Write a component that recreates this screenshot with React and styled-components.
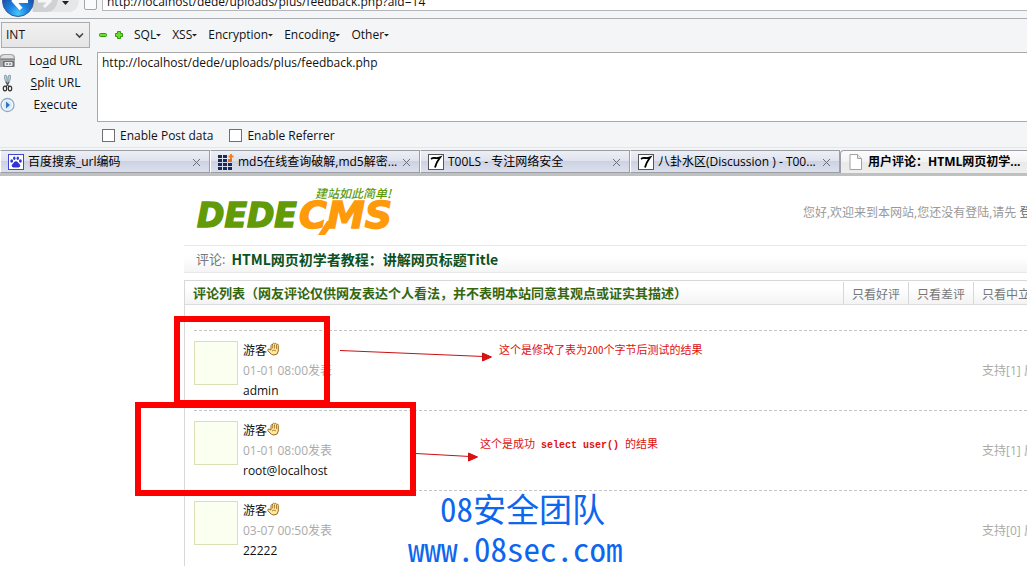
import React from 'react';
import styled, { createGlobalStyle } from 'styled-components';

const GlobalStyle = createGlobalStyle`
  * {
    box-sizing: border-box;
  }

  body {
    margin: 0;
    background: #ffffff;
    color: #111111;
    font-family: "Open Sans", "Noto Sans CJK SC", sans-serif;
    font-size: 12px;
    line-height: 20px;
    overflow: hidden;
  }

  button, input, select, textarea {
    font: inherit;
    color: inherit;
  }

  a {
    color: inherit;
    text-decoration: none;
  }
`;

const Chrome = styled.header`
  background: #f4f5f7;
`;

const NavBar = styled.div`
  display: flex;
  align-items: flex-end;
  height: 19px;
  border-bottom: 1px solid #a9acb1;
  overflow: hidden;
`;

const NavButtons = styled.button`
  flex: none;
  width: 84px;
  height: 18px;
  padding: 0;
  border: 0;
  background: none;

  svg {
    display: block;
  }
`;

const Address = styled.label`
  flex: 1;
  display: flex;
  align-items: flex-end;
  gap: 5px;
  padding-bottom: 7px;

  span {
    width: 13px;
    height: 16px;
    margin-bottom: 1px;
    border: 1px solid #a5a5a5;
    border-radius: 2px;
    background: #fbfbfb;
  }

  input {
    flex: 1;
    height: 18px;
    padding: 0 4px;
    border: 1px solid #b4b6ba;
    border-right: 0;
    background: #ffffff;
    font-size: 12px;
    outline: 0;
  }
`;

const HackBar = styled.section`
  display: flex;
  height: 129px;
  padding-top: 3px;
  border-bottom: 1px solid #e3e5e8;
`;

const SideColumn = styled.div`
  flex: none;
  width: 97px;
`;

const ModeSelect = styled.div`
  position: relative;
  width: 90px;
  height: 26px;
  margin-bottom: 2px;
  margin-left: 1px;

  select {
    appearance: none;
    width: 89px;
    height: 26px;
    padding: 0 4px;
    border: 1px solid #acacac;
    border-radius: 0;
    background: linear-gradient(#f1f1f1, #e5e5e5);
    font-size: 12px;
  }

  svg {
    position: absolute;
    top: 10px;
    right: 7px;
    pointer-events: none;
  }
`;

const SideButton = styled.button`
  display: flex;
  align-items: center;
  width: 92px;
  height: 22px;
  padding: 0;
  border: 0;
  background: none;
  font-size: 12px;

  svg {
    flex: none;
  }

  span {
    flex: 1;
    padding-left: 3px;
    text-align: center;
    white-space: nowrap;
  }

  u {
    text-underline-offset: 2px;
  }
`;

const MainColumn = styled.div`
  flex: 1;
  min-width: 0;
`;

const MenuBar = styled.nav`
  display: flex;
  align-items: center;
  height: 26px;
  margin-bottom: 4px;
`;

const IconButton = styled.button`
  width: 16px;
  height: 16px;
  padding: 0;
  border: 0;
  background: none;

  svg {
    display: block;
  }
`;

const MenuButton = styled.button`
  display: flex;
  align-items: center;
  padding: 0;
  margin-left: ${(props) => (props.$first ? '5px' : '11px')};
  border: 0;
  background: none;
  font-size: 12px;
`;

const UrlArea = styled.textarea`
  display: block;
  width: 100%;
  height: 70px;
  padding: 0 4px;
  border: 1px solid #a9a9a9;
  border-right: 0;
  background: #ffffff;
  font-size: 12px;
  line-height: 20px;
  outline: 0;
  resize: none;
`;

const Options = styled.div`
  display: flex;
  align-items: center;
  gap: 16px;
  height: 27px;
  padding-left: 5px;
`;

const Option = styled.label`
  display: flex;
  align-items: center;
  gap: 5px;
  font-size: 12px;

  input {
    appearance: none;
    width: 13px;
    height: 13px;
    margin: 0;
    border: 1px solid #707070;
    background: #ffffff;
  }
`;

const TabStrip = styled.div`
  display: flex;
  height: 28px;
  padding-top: 2px;
  border-bottom: 3px solid #bfc1c0;
  overflow: hidden;
`;

const Tab = styled.div`
  flex: none;
  display: flex;
  align-items: center;
  width: ${(props) => (props.$active ? '240px' : '210px')};
  padding: 0 7px;
  border: 1px solid #9c9ea6;
  border-bottom: ${(props) => (props.$active ? '0' : '1px solid #9c9ea6')};
  border-left-color: ${(props) => (props.$active ? '#9c9ea6' : '#ffffff')};
  border-radius: ${(props) => (props.$active ? '4px 0 0 0' : '0')};
  background: ${(props) =>
    props.$active
      ? 'linear-gradient(#fcfcfc, #f2f2f2 50%, #e9e9ea 50%, #eeeeee)'
      : 'linear-gradient(#edeff5, #dfe2ee 48%, #cdd2e3 50%, #dce0ec)'};
  font-weight: ${(props) => (props.$active ? '700' : '400')};

  svg {
    flex: none;
  }
`;

const TabTitle = styled.a`
  flex: 1;
  padding-left: 4px;
  font-size: 12px;
  color: #000000;
  white-space: nowrap;
`;

const Site = styled.main`
  margin-left: 184px;
`;

const SiteHeader = styled.header`
  display: flex;
  justify-content: space-between;
  align-items: flex-start;
  height: 69px;
  padding-left: 10px;
`;

const Welcome = styled.p`
  flex: none;
  width: 224px;
  margin: 0;
  padding-top: 27px;
  overflow: hidden;
  color: #999999;
  white-space: nowrap;

  a {
    color: #666666;
  }
`;

const TitleBar = styled.div`
  display: flex;
  align-items: center;
  gap: 6px;
  height: 28px;
  margin-bottom: 7px;
  padding-left: 12px;
  border-top: 1px solid #e8e8e8;
  border-bottom: 1px solid #e8e8e8;
  background: linear-gradient(#ffffff 40%, #f4f4f4);
  color: #777777;
  font-size: 13px;

  h1 {
    margin: 0;
    color: #0b5123;
    font-family: "Noto Sans CJK SC", sans-serif;
    font-size: 14px;
    font-weight: 700;
  }
`;

const CommentBox = styled.section`
  border-top: 1px solid #d8d8d8;
  border-left: 1px solid #d8d8d8;
`;

const CommentHeader = styled.div`
  display: flex;
  justify-content: space-between;
  align-items: flex-end;
  height: 24px;
  border-bottom: 1px solid #dcdcdc;
  background: linear-gradient(#ffffff 30%, #f3f3f3);

  h2 {
    align-self: center;
    margin: 0;
    padding-left: 8px;
    color: #35660f;
    font-size: 13px;
    font-weight: 700;
    white-space: nowrap;
  }
`;

const Filters = styled.nav`
  flex: none;
  display: flex;
  width: 184px;
  overflow: hidden;
`;

const Filter = styled.a`
  flex: none;
  width: 65px;
  height: 22px;
  padding: 3px 0 0 8px;
  border-left: 1px solid #d8d8d8;
  color: #777777;
  white-space: nowrap;
`;

const CommentList = styled.ul`
  margin: 0;
  padding: 25px 0 0 9px;
  list-style: none;
`;

const CommentItem = styled.li`
  display: flex;
  gap: 5px;
  height: 80px;
  padding-top: 10px;
  border-top: 1px dashed #c4c4c4;
`;

const Avatar = styled.div`
  flex: none;
  width: 44px;
  height: 44px;
  border: 1px solid #dcdfb4;
  background: #fafff0;
`;

const CommentBody = styled.div`
  flex: 1;

  p {
    margin: 0;
  }
`;

const Author = styled.p`
  display: flex;
  align-items: center;
  height: 20px;

  svg {
    margin-bottom: 4px;
  }
`;

const PostTime = styled.p`
  color: #aaaaaa;
`;

const Votes = styled.div`
  flex: none;
  width: 45px;
  padding-top: 20px;
  overflow: hidden;
  color: #aaaaaa;
  white-space: nowrap;
`;

// marks drawn over the page
const RedBox = styled.div`
  position: absolute;
  left: ${(props) => props.$left}px;
  top: ${(props) => props.$top}px;
  width: ${(props) => props.$width}px;
  height: ${(props) => props.$height}px;
  border: 6px solid #fe0000;
`;

const ArrowLayer = styled.svg`
  position: absolute;
  left: 340px;
  top: 340px;
  pointer-events: none;
`;

const Note = styled.p`
  position: absolute;
  left: ${(props) => props.$left}px;
  top: ${(props) => props.$top}px;
  margin: 0;
  color: #e01010;
  font-family: "Noto Sans CJK SC", sans-serif;
  font-size: 11px;
  line-height: 16px;
  font-feature-settings: "hwid";
  white-space: nowrap;

  code {
    font-family: "Liberation Mono", monospace;
    font-size: 10px;
    font-weight: 700;
    white-space: pre;
  }
`;

const Watermark = styled.div`
  position: absolute;
  left: 408px;
  top: 488px;
  color: #0d66ee;
  font-family: "Noto Sans CJK SC", sans-serif;
  font-size: 33px;
  line-height: 40px;
  font-feature-settings: "hwid";
  white-space: nowrap;

  p {
    margin: 0;
  }

  p:first-child {
    padding-left: 32px;
  }
`;

const BackForward = () => (
  <svg width="84" height="18" viewBox="0 0 84 18">
    <defs>
      <radialGradient id="ball" cx="50%" cy="90%" r="75%">
        <stop offset="0" stopColor="#47c8ff" />
        <stop offset="0.4" stopColor="#1d84e0" />
        <stop offset="1" stopColor="#1a3f9a" />
      </radialGradient>
    </defs>
    <path d="M30 0h49q-1 11-9 12H32z" fill="#e6e7e9" />
    <path d="M33 0h25q-2 11-10 12H33z" fill="#cfd1d3" />
    <circle cx="18" cy="1" r="15.5" fill="url(#ball)" stroke="#3d5c96" />
    <path d="M20-5l-6 6 7 8M14 1h14" stroke="#fff" strokeWidth="4" fill="none" />
    <path d="M44-4l6 5-6 6M38 1h10" stroke="#f6f6f6" strokeWidth="3" fill="none" />
    <path d="M62 1h7l-3.500 4z" fill="#222" />
  </svg>
);

const Caret = () => (
  <svg width="5" height="4" viewBox="0 0 5 4">
    <path d="M0 1h5L2.500 3.500z" fill="#222" />
  </svg>
);

const LoadIcon = () => (
  <svg width="16" height="16" viewBox="0 0 16 16">
    <path d="M0 3q1-2 4-2h7q3 0 4 3v9q0 1-1 1H0z" fill="#a3a5a8" />
    <path d="M1 4q1-2 4-2h6q2 0 3 3H1z" fill="#dfe0e2" />
    <path d="M0 6h15v1H0z" fill="#85888c" />
    <rect x="3" y="8" width="11" height="6" rx="1" fill="#6b6e72" />
    <rect x="4.500" y="9" width="8" height="4" rx="1" fill="#e8e9ea" />
    <path d="M6 11h2m1 0h2" stroke="#55585c" />
  </svg>
);

const ScissorsIcon = () => (
  <svg width="16" height="18" viewBox="0 0 16 18">
    <path d="M5 1q2 0 2 3v6l-2-4q-1-4 0-5zM10 1q-2 0-2 3v6l2-4q1-4 0-5z" fill="#c9dbe2" stroke="#7e9aa6" />
    <path d="M6 8l3 5M9 8l-3 5" stroke="#555" strokeWidth="1.300" />
    <ellipse cx="5" cy="14.500" rx="1.700" ry="2.300" fill="none" stroke="#333" strokeWidth="1.200" />
    <ellipse cx="10" cy="14.500" rx="1.700" ry="2.300" fill="none" stroke="#333" strokeWidth="1.200" />
  </svg>
);

const ExecuteIcon = () => (
  <svg width="16" height="16" viewBox="0 0 16 16">
    <circle cx="7.500" cy="8" r="6.500" fill="#f4f9fe" stroke="#91a9c4" strokeWidth="1.300" />
    <circle cx="7.500" cy="8" r="4.500" fill="#dcebf9" />
    <path d="M6 4.500l4 3.500-4 3.500z" fill="#2d74c4" />
  </svg>
);

const PawIcon = () => (
  <svg width="16" height="16" viewBox="0 0 16 16">
    <rect x="0.500" y="0.500" width="15" height="15" fill="#fff" stroke="#3d46d8" />
    <g fill="#2b35d8">
      <ellipse cx="3.700" cy="7" rx="1.400" ry="1.700" />
      <ellipse cx="6.300" cy="4.200" rx="1.200" ry="1.700" />
      <ellipse cx="9.800" cy="4.200" rx="1.200" ry="1.700" />
      <ellipse cx="12.400" cy="7" rx="1.400" ry="1.700" />
      <path d="M8 7.300c1.800 0 2.200 1.700 3.600 2.900 1.400 1.200.5 3.200-1.100 3.200h-5c-1.600 0-2.500-2-1.100-3.200C5.800 9 6.200 7.300 8 7.300z" />
    </g>
  </svg>
);

const GridIcon = () => (
  <svg width="16" height="16" viewBox="0 0 16 16">
    <g fill="#1b2b59">
      {[1, 5, 9, 13].map((y) =>
        [0, 5, 10].map((x) =>
          x === 10 && y < 9 ? null : <rect key={`${x}-${y}`} x={x} y={y} width="4" height="3" />
        )
      )}
    </g>
    <path d="M13 0v5M10.500 2.500h5" stroke="#f08020" strokeWidth="2" />
    <rect x="10" y="5" width="4" height="3" fill="#e07020" />
  </svg>
);

const SevenIcon = () => (
  <svg width="16" height="16" viewBox="0 0 16 16">
    <rect x="0.500" y="0.500" width="15" height="15" fill="#fff" stroke="#555" />
    <path d="M3 5q2-1.500 4-1t5-.5Q8.500 8 7 13.500" fill="none" stroke="#000" strokeWidth="1.900" />
  </svg>
);

const PageIcon = () => (
  <svg width="16" height="16" viewBox="0 0 16 16">
    <path d="M2 .5h7.500l4 4v11H2z" fill="#fff" stroke="#a2a2a2" />
    <path d="M9.500.5v4h4" fill="#e8e8e8" stroke="#a2a2a2" />
  </svg>
);

const CloseIcon = () => (
  <svg width="12" height="12" viewBox="0 0 12 12">
    <path d="M3 3l7 7M10 3l-7 7" stroke="#6c6f79" />
  </svg>
);

const HandIcon = () => (
  <svg width="13" height="14" viewBox="0 0 13 14">
    <path
      d="M4 8V3.500q.5-1.500 1.500-.5V2q1-1.500 2-.2 1.300-1 2 .4 1.600-.5 1.800 1.200V9q-.3 4-4.300 4-2.500 0-4-2L.8 8.500Q.5 7 2 7z"
      fill="#ffe9a6"
      stroke="#9a6a14"
    />
    <path d="M5.700 3v3.500M7.600 2.500v4M9.500 3v4M5 9q2-2 4 0" stroke="#9a6a14" strokeWidth="0.800" fill="none" />
  </svg>
);

const Logo = () => (
  <svg width="210" height="69" viewBox="0 0 210 69" role="img" aria-label="DEDECMS">
    <g fontFamily="DejaVu Sans" fontWeight="700" fontStyle="italic">
      <text x="3" y="51" fontSize="33" fill="#629a08" stroke="#629a08" strokeWidth="1.500">DEDE</text>
      <text x="105" y="52" fontSize="38" fill="#ff9a0a" stroke="#ff9a0a" strokeWidth="1.500">CMS</text>
    </g>
    <path d="M133 45h8l-10 14h-7z" fill="#ff9a0a" />
    <text x="121" y="22" fontFamily="Noto Sans CJK SC" fontSize="12" fontWeight="500" fontStyle="italic" fill="#629a08">
      建站如此简单!
    </text>
  </svg>
);

const tabs = [
  { icon: PawIcon, title: '百度搜索_url编码' },
  { icon: GridIcon, title: 'md5在线查询破解,md5解密...' },
  { icon: SevenIcon, title: 'T00LS - 专注网络安全' },
  { icon: SevenIcon, title: '八卦水区(Discussion ) - T00...' },
  { icon: PageIcon, title: '用户评论：HTML网页初学...', active: true },
];

const comments = [
  { time: '01-01 08:00', text: 'admin', votes: 1 },
  { time: '01-01 08:00', text: 'root@localhost', votes: 1 },
  { time: '03-07 00:50', text: '22222', votes: 0 },
];

const App = () => {
  return (
    <>
      <GlobalStyle />
      <Chrome>
        <NavBar>
          <NavButtons type="button" aria-label="Back">
            <BackForward />
          </NavButtons>
          <Address>
            <span />
            <input type="text" aria-label="Address" defaultValue="http://localhost/dede/uploads/plus/feedback.php?aid=14" />
          </Address>
        </NavBar>

        <HackBar>
          <SideColumn>
            <ModeSelect>
              <select aria-label="Mode" defaultValue="INT">
                <option>INT</option>
              </select>
              <svg width="9" height="7" viewBox="0 0 9 7">
                <path d="M1 1.500l3.500 3.500L8 1.500" stroke="#444" strokeWidth="1.600" fill="none" />
              </svg>
            </ModeSelect>
            <SideButton type="button">
              <LoadIcon />
              <span>Lo<u>a</u>d URL</span>
            </SideButton>
            <SideButton type="button">
              <ScissorsIcon />
              <span><u>S</u>plit URL</span>
            </SideButton>
            <SideButton type="button">
              <ExecuteIcon />
              <span>E<u>x</u>ecute</span>
            </SideButton>
          </SideColumn>

          <MainColumn>
            <MenuBar>
              <IconButton type="button" aria-label="Remove">
                <svg width="16" height="16" viewBox="0 0 16 16">
                  <rect x="2.500" y="6.500" width="7" height="3" rx="1" fill="#6fdc2c" stroke="#2f9a10" />
                </svg>
              </IconButton>
              <IconButton type="button" aria-label="Add">
                <svg width="16" height="16" viewBox="0 0 16 16">
                  <path d="M4.500 4.500h3v2h2v3h-2v2h-3v-2h-2v-3h2z" fill="#6fdc2c" stroke="#2f9a10" />
                </svg>
              </IconButton>
              {['SQL', 'XSS', 'Encryption', 'Encoding', 'Other'].map((name, i) => (
                <MenuButton key={name} type="button" $first={i === 0}>
                  {name}
                  <Caret />
                </MenuButton>
              ))}
            </MenuBar>
            <UrlArea aria-label="URL" defaultValue="http://localhost/dede/uploads/plus/feedback.php" />
            <Options>
              <Option>
                <input type="checkbox" />
                Enable Post data
              </Option>
              <Option>
                <input type="checkbox" />
                Enable Referrer
              </Option>
            </Options>
          </MainColumn>
        </HackBar>

        <TabStrip>
          {tabs.map(({ icon: Icon, title, active }) => (
            <Tab key={title} $active={active}>
              <Icon />
              <TabTitle href="#">{title}</TabTitle>
              {!active && <CloseIcon />}
            </Tab>
          ))}
        </TabStrip>
      </Chrome>

      <Site>
        <SiteHeader>
          <Logo />
          <Welcome>
            您好,欢迎来到本网站,您还没有登陆,请先 <a href="#">登</a>
          </Welcome>
        </SiteHeader>

        <TitleBar>
          评论:
          <h1>HTML网页初学者教程：讲解网页标题Title</h1>
        </TitleBar>

        <CommentBox>
          <CommentHeader>
            <h2>评论列表（网友评论仅供网友表达个人看法，并不表明本站同意其观点或证实其描述）</h2>
            <Filters>
              <Filter href="#">只看好评</Filter>
              <Filter href="#">只看差评</Filter>
              <Filter href="#">只看中立</Filter>
            </Filters>
          </CommentHeader>

          <CommentList>
            {comments.map((comment, i) => (
              <CommentItem key={i}>
                <Avatar />
                <CommentBody>
                  <Author>
                    游客
                    <HandIcon />
                  </Author>
                  <PostTime>{comment.time}发表</PostTime>
                  <p>{comment.text}</p>
                </CommentBody>
                <Votes>支持[{comment.votes}] 反</Votes>
              </CommentItem>
            ))}
          </CommentList>
        </CommentBox>
      </Site>

      <RedBox $left={174} $top={316} $width={156} $height={90} />
      <RedBox $left={135} $top={402} $width={281} $height={94} />
      <ArrowLayer width="160" height="130" viewBox="0 0 160 130">
        <g stroke="#cc1010" fill="#e01010">
          <path d="M0 10.500L144 16.500" />
          <path d="M142.500 13l9 4-9 4z" />
          <path d="M76 113.500L130 116.500" />
          <path d="M128.500 113l9 4-9 4z" />
        </g>
      </ArrowLayer>
      <Note $left={499} $top={341}>这个是修改了表为200个字节后测试的结果</Note>
      <Note $left={480} $top={435}>
        这个是成功<code> select user() </code>的结果
      </Note>
      <Watermark>
        <p>08安全团队</p>
        <p>www.08sec.com</p>
      </Watermark>
    </>
  );
};

export default App;
